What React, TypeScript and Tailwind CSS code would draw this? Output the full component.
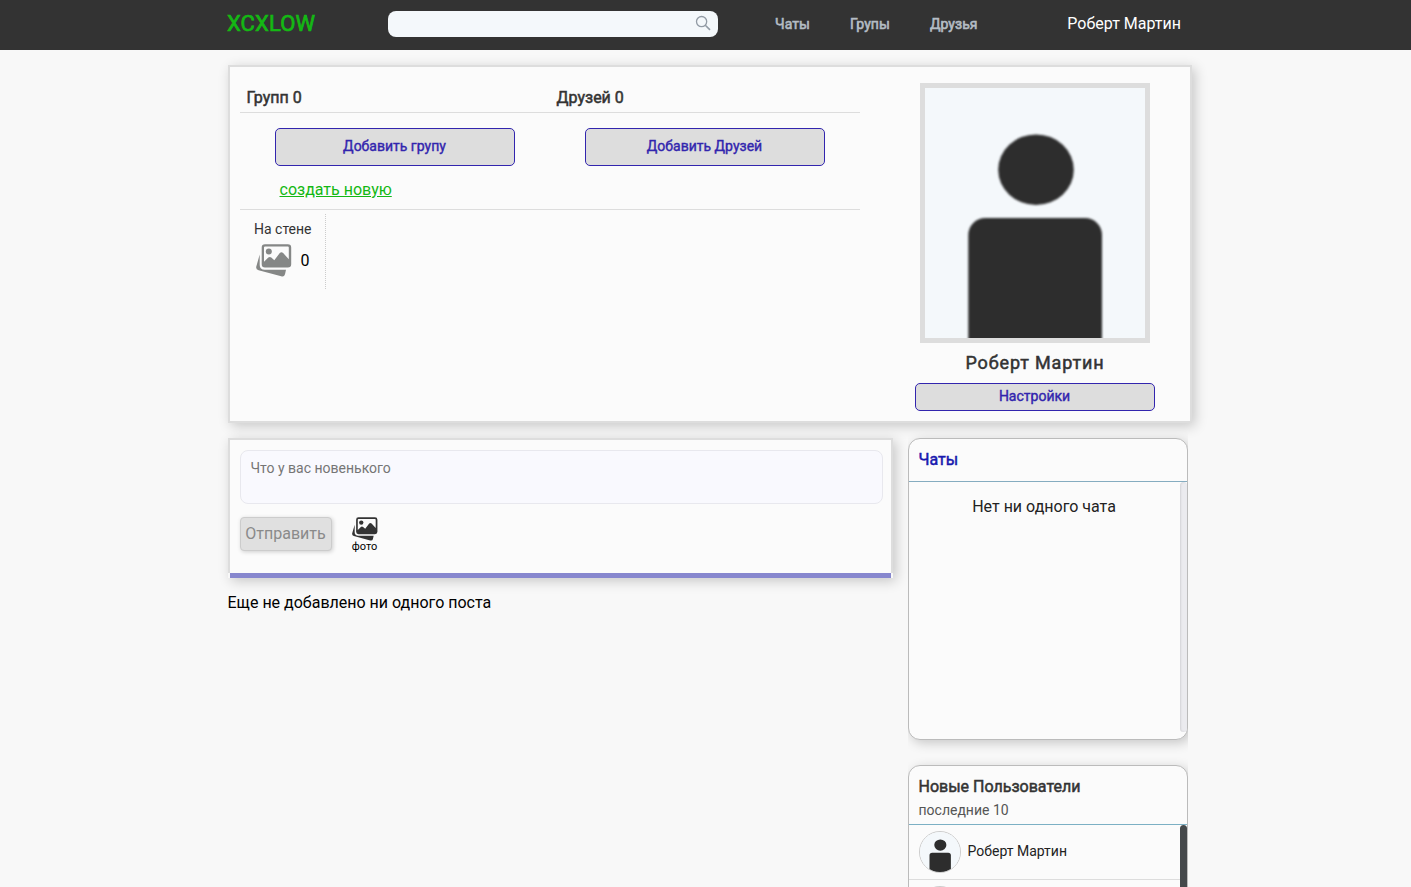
import React from "react";

function PhotosIcon({ className }: { className: string }) {
  return (
    <svg viewBox="0 0 36 33" className={className} fill="currentColor">
      <path
        fillRule="evenodd"
        d="M9 .3H31.8Q35.2 .3 35.2 3.6V20.3Q35.2 23.6 31.8 23.6H9Q5.7 23.6 5.7 20.3V3.6Q5.7 .3 9 .3ZM9 2.6Q8 2.6 8 3.6V17.8L12.3 13.6Q13.8 12.3 15.3 13.6L18.3 16.2L23.8 9Q25.4 7.3 27.1 9L32.8 15.2V3.6Q32.8 2.6 31.8 2.6Z"
      />
      <circle cx="12.8" cy="7.6" r="3" />
      <path d="M3.7 10.5V21Q3.7 25.8 8.8 25.8H30L29 30.3Q28.2 33.1 25.2 32.3L2.6 26.2Q-.4 25.3 .3 22.4Z" />
    </svg>
  );
}

function Person({ className, viewBox = "0 0 220 250" }: { className: string; viewBox?: string }) {
  return (
    <svg viewBox={viewBox} preserveAspectRatio="none" className={className}>
      <rect x="-20" width="260" height="250" fill="#f4f8fb" />
      <g fill="#2d2d2d" style={{ filter: "blur(1px)" }}>
        <ellipse cx="111" cy="81.7" rx="37.8" ry="35.3" />
        <rect x="43.3" y="130" width="133.7" height="150" rx="17" />
      </g>
    </svg>
  );
}

const navItems = ["Чаты", "Групы", "Друзья"];

function Header() {
  return (
    <header className="h-[50px] bg-[#333]">
      <div className="mx-auto flex h-full w-[957px] items-start">
        <div className="w-[161px] pt-[10px] text-[22px] leading-[28px] tracking-[0.1px] text-[#14b814] [-webkit-text-stroke:0.7px_#14b814]">
          XCXLOW
        </div>
        <div className="mt-[11px] flex h-[26px] w-[330px] justify-end rounded-[8px] bg-[#f4f8fb] pr-[7px] pt-[4px]">
          <svg viewBox="0 0 16 16" className="size-4" fill="none" stroke="#929ba5" strokeWidth="1.3">
            <circle cx="6.6" cy="6.6" r="5.1" />
            <path d="M10.3 10.3L15 14.9" strokeWidth="1.6" />
          </svg>
        </div>
        <nav className="ml-[57px] flex gap-[40px] pt-[14px] text-[14px] leading-5 tracking-[0.05px] text-[#b4bcc4] [-webkit-text-stroke:0.6px_#b4bcc4]">
          {navItems.map((n) => (
            <a key={n}>{n}</a>
          ))}
        </nav>
        <div className="ml-auto pr-[3px] pt-[13px] text-[16px] leading-[22px] text-white">Роберт Мартин</div>
      </div>
    </header>
  );
}

function AddColumn({ title, button, link }: { title: string; button: string; link?: string }) {
  return (
    <div className="w-[310px]">
      <div className="h-[30px] border-b border-[#ddd] pl-[6.5px] pt-[4px] text-[16px] leading-[22px] [-webkit-text-stroke:0.5px_#333]">
        {title}
      </div>
      <button className="mx-[35px] mt-[15px] block h-[38px] w-[240px] rounded-[5px] border border-[#3225ae] bg-[#ddd] pb-[2px] pr-px text-[14px] text-[#3225ae] [-webkit-text-stroke:0.4px_#3225ae]">
        {button}
      </button>
      {link && (
        <a className="ml-[39.5px] mt-[13px] block text-[16px] leading-[22px] text-[#14b814] underline">{link}</a>
      )}
    </div>
  );
}

function Profile() {
  return (
    <section className="flex h-[358px] w-[964px] justify-between border-2 border-[#ddd] bg-[#fbfbfb] pl-[10px] pr-[35px] pt-4 text-[#333] shadow-[3px_3px_12px_rgba(0,0,0,0.2)]">
      <div className="w-[620px]">
        <div className="flex h-[127px] border-b border-[#ddd]">
          <AddColumn title="Групп 0" button="Добавить групу" link="создать новую" />
          <AddColumn title="Друзей 0" button="Добавить Друзей" />
        </div>
        <div className="mt-1 h-[75px] w-[86px] border-r border-dotted border-[#ccc] pt-[6px]">
          <div className="pl-[14px] text-[14px] leading-[18px]">На стене</div>
          <div className="mt-[6px] flex pl-4">
            <PhotosIcon className="h-[33px] w-9 text-[#858786]" />
            <span className="ml-[8.5px] mt-[7px] text-[16px] leading-5 text-black">0</span>
          </div>
        </div>
      </div>
      <div className="flex w-[240px] flex-col items-center">
        <Person className="h-[260px] w-[230px] border-[5px] border-[#ddd]" />
        <div className="mt-[7px] text-[18px] leading-[26px] tracking-[0.85px] [-webkit-text-stroke:0.5px_#333]">
          Роберт Мартин
        </div>
        <button className="mt-[7px] h-[28px] w-[240px] rounded-[5px] border border-[#3225ae] bg-[#ddd] pb-[2px] pr-px text-[14px] leading-5 text-[#3225ae] [-webkit-text-stroke:0.4px_#3225ae]">
          Настройки
        </button>
      </div>
    </section>
  );
}

function Composer() {
  return (
    <section className="h-[140px] w-[665px] shadow-[3px_3px_12px_rgba(0,0,0,0.2)]">
      <div className="h-[135px] border-x-2 border-t-2 border-[#ddd] bg-[#fbfbfb] px-[10px] pt-[10px]">
        <div className="h-[54px] w-[643px] rounded-[8px] border border-[#e8e8ee] bg-[#f9f9fe] px-[9.5px] pt-[8px] text-[14px] leading-[19px] text-[#757575]">
          Что у вас новенького
        </div>
        <div className="mt-[13px] flex">
          <button className="h-[34px] w-[92px] rounded-[4px] border border-[#ccc] bg-[#e0e0e0] pr-px text-[16px] text-[#8a8a8a] shadow-[1px_1px_4px_rgba(0,0,0,0.18)]">
            Отправить
          </button>
          <div className="ml-[19.5px] flex w-[26px] flex-col items-center">
            <PhotosIcon className="h-[24px] w-[26px] text-[#333]" />
            <span className="-mt-px text-[11px] leading-[13px] text-black">фото</span>
          </div>
        </div>
      </div>
      <div className="mx-[2px] h-[5px] bg-[#8787ce]" />
    </section>
  );
}

function UserRow({ name }: { name?: string }) {
  return (
    <div className="flex h-[55px] items-center border-b border-[#ddd] pl-[10px]">
      <div className="size-[42px] overflow-hidden rounded-full border border-[#ccc]">
        <Person className="size-10" viewBox="-16 0 250 250" />
      </div>
      {name && <span className="ml-[6.5px] pb-[2px] text-[14px] text-[#222]">{name}</span>}
    </div>
  );
}

function Sidebar() {
  return (
    <aside className="-mt-2 h-[457px] w-[280px] overflow-hidden pt-2">
      <section className="h-[302px] rounded-[12px] border border-[#bbb] bg-[#fbfbfb] shadow-[3px_3px_12px_rgba(0,0,0,0.2)]">
        <div className="h-[43px] border-b border-[#85acc0] pl-[9.5px] pt-[10px] text-[16px] leading-[22px] text-[#1818ae] [-webkit-text-stroke:0.5px_#1818ae]">
          Чаты
        </div>
        <div className="flex h-[250px]">
          <div className="flex-1 pr-px pt-[14px] text-center text-[16px] leading-[22px] text-[#222]">
            Нет ни одного чата
          </div>
          <div className="w-[7px] rounded-[5px] bg-[#ebebef] shadow-[inset_1px_0_2px_rgba(0,0,0,0.1)]" />
        </div>
      </section>
      <section className="mt-[25px] h-[302px] rounded-[12px] border border-[#bbb] bg-[#fbfbfb] shadow-[3px_3px_12px_rgba(0,0,0,0.2)]">
        <div className="h-[59px] border-b border-[#7cb0c4] pl-[9.5px] pt-[10px] text-[#333]">
          <div className="text-[16px] leading-[22px] [-webkit-text-stroke:0.5px_#333]">Новые Пользователи</div>
          <div className="mt-[2px] text-[14px] leading-5 text-[#555]">последние 10</div>
        </div>
        <div className="flex h-[240px]">
          <div className="flex-1">
            <UserRow name="Роберт Мартин" />
            <UserRow />
          </div>
          <div className="w-[7px] rounded-t-[4px] bg-[#45494b]" />
        </div>
      </section>
    </aside>
  );
}

export default function App() {
  return (
    <div className="h-[887px] overflow-hidden bg-[#f8f8f8] font-['Roboto',sans-serif] text-black">
      <Header />
      <main className="ml-[228px] mt-[15px] w-[964px]">
        <Profile />
        <div className="mt-[15px] flex gap-[15px]">
          <div>
            <Composer />
            <p className="-ml-[0.5px] mt-[15px] text-[16px] leading-[20px]">Еще не добавлено ни одного поста</p>
          </div>
          <Sidebar />
        </div>
      </main>
    </div>
  );
}
